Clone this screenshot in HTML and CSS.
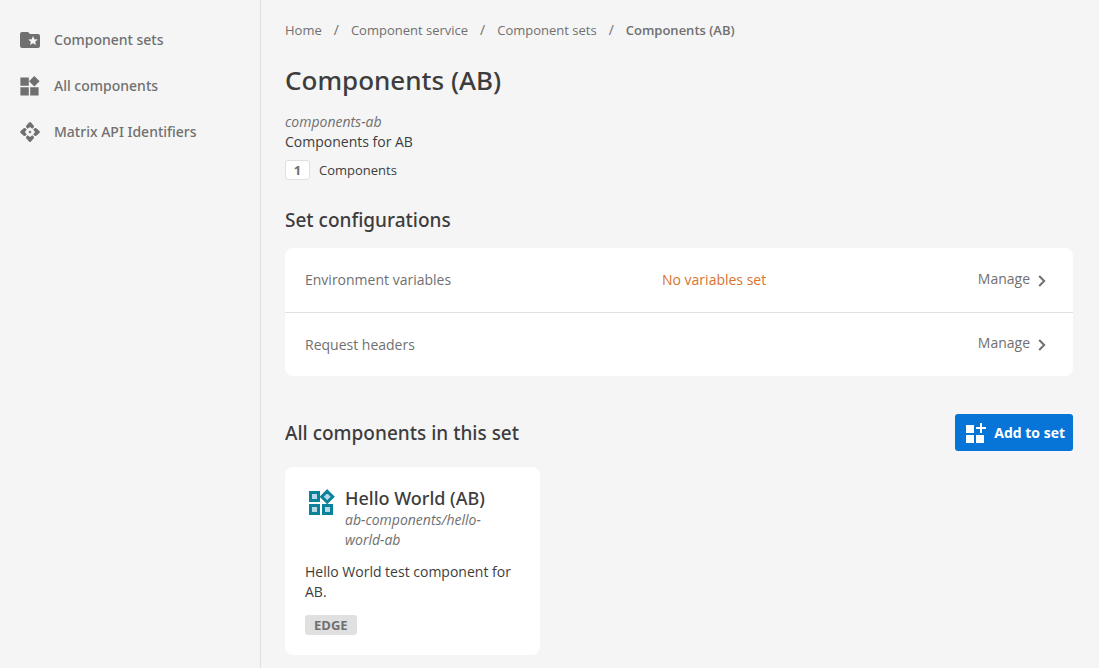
FILE: index.html
```html
<!DOCTYPE html>
<html lang="en">
<head>
<meta charset="utf-8">
<meta name="viewport" content="width=device-width, initial-scale=1">
<title>Components (AB)</title>
<link rel="stylesheet" href="styles.css">
</head>
<body>
<div class="layout">
  <nav class="sidebar" aria-label="Main">
    <a class="nav-link" href="#sets">
      <svg class="icon" viewBox="0 0 24 24" aria-hidden="true"><path d="M20 6h-8l-2-2H4a2 2 0 0 0-2 2v12a2 2 0 0 0 2 2h16a2 2 0 0 0 2-2V8a2 2 0 0 0-2-2m-2.060 11L15 15.280 12.060 17l.78-3.330-2.590-2.240 3.410-.29L15 8l1.340 3.140 3.410.29-2.590 2.240z"/></svg>
      Component sets
    </a>
    <a class="nav-link" href="#all">
      <svg class="icon" viewBox="0 0 24 24" aria-hidden="true"><path d="M12.200 13.200h8.400v8.200h-8.400zM2.400 21.400h8.400v-8.200H2.400zM2.400 3.600v8.200h8.400V3.600zM16.300 2L11 7.300l5.300 5.300 5.300-5.300z"/></svg>
      All components
    </a>
    <a class="nav-link" href="#identifiers">
      <svg class="icon" viewBox="0 0 24 24" aria-hidden="true"><path d="M12 10.500l1.500 1.500-1.500 1.500-1.500-1.500zM8 6l3-3.400q1-1 2 0L16 6v1l-1.600 1.800L12 6.900 9.600 8.800 8 7zM8 18l3 3.400q1 1 2 0L16 18v-1l-1.600-1.800L12 17.100l-2.400-1.900L8 17zM6 8l-3.400 3q-1 1 0 2L6 16h1l1.800-1.600L6.900 12l1.900-2.400L7 8zM18 8l3.400 3q1 1 0 2L18 16h-1l-1.800-1.600 1.900-2.400-1.900-2.400L17 8z"/></svg>
      Matrix API Identifiers
    </a>
  </nav>
  <main class="content">
    <nav aria-label="Breadcrumb">
      <ol class="breadcrumb">
        <li><a href="#home">Home</a></li>
        <li><a href="#service">Component service</a></li>
        <li><a href="#sets">Component sets</a></li>
        <li aria-current="page">Components (AB)</li>
      </ol>
    </nav>
    <h1 class="page-title">Components (AB)</h1>
    <p class="slug">components-ab</p>
    <p>Components for AB</p>
    <p class="count"><span class="count-badge">1</span>Components</p>

    <section>
      <h2 class="section-title">Set configurations</h2>
      <div class="config">
        <div class="config-row">
          <span>Environment variables</span>
          <span class="warning">No variables set</span>
          <a class="manage" href="#variables">Manage
            <svg class="chevron" viewBox="0 0 8 12" aria-hidden="true"><path d="M1.200 1 6.200 6l-5 5"/></svg></a>
        </div>
        <div class="config-row">
          <span>Request headers</span>
          <span></span>
          <a class="manage" href="#headers">Manage
            <svg class="chevron" viewBox="0 0 8 12" aria-hidden="true"><path d="M1.200 1 6.200 6l-5 5"/></svg></a>
        </div>
      </div>
    </section>

    <section>
      <div class="section-head">
        <h2>All components in this set</h2>
        <button class="add-button" type="button">
          <svg class="icon" viewBox="0 0 24 24" aria-hidden="true"><path d="M3 4h8v8H3zM3 14h8v8H3zM13 14h8v8h-8zM17 2h2v4h4v2h-4v4h-2V8h-4V6h4z"/></svg>
          Add to set
        </button>
      </div>
      <div class="cards">
        <article class="card">
          <div class="card-head">
            <svg class="card-icon" viewBox="0 0 32 32" aria-hidden="true"><path d="M5.500 5.500h8v8h-8zM5.500 18.500h8v8h-8zM18.500 18.500h8v8h-8zM22.200 4.200l5.500 5.500-5.500 5.500-5.500-5.500z"/></svg>
            <div>
              <h3 class="card-title">Hello World (AB)</h3>
              <p class="slug">ab-components/hello-world-ab</p>
            </div>
          </div>
          <p>Hello World test component for AB.</p>
          <span class="tag">EDGE</span>
        </article>
      </div>
    </section>
  </main>
</div>
</body>
</html>
```
FILE: styles.css
```css
* { box-sizing: border-box; }

body {
  margin: 0;
  background: #f5f5f5;
  color: #3d3d3d;
  font: 14px/20px "Open Sans", sans-serif;
}

h1, h2, h3, p, ol { margin: 0; padding: 0; }
h1, h2, h3 { font-family: "Noto Sans", "Open Sans", sans-serif; font-weight: 500; }
h2 { font-size: 19px; line-height: 28px; }
a { color: inherit; text-decoration: none; }

.layout { display: flex; min-height: 100vh; }

.sidebar {
  flex: 0 0 261px;
  padding: 17px 18px;
  border-right: 1px solid #e0e0e0;
}

.nav-link {
  display: flex;
  align-items: center;
  gap: 12px;
  height: 46px;
  color: #707070;
  font-family: "Noto Sans", "Open Sans", sans-serif;
  font-weight: 500;
}

.icon { width: 24px; height: 24px; fill: currentColor; }

.content { flex: 1; min-width: 0; padding: 20px 26px 13px 24px; }

.breadcrumb {
  display: flex;
  list-style: none;
  color: #707070;
  font-size: 13px;
}

.breadcrumb li + li::before { content: "/"; margin: 0 12px; font-weight: 400; font-size: 14px; }
.breadcrumb [aria-current] { font-weight: 600; }

.page-title { margin: 22px 0 14px; font-size: 26px; line-height: 36px; }
.slug { color: #707070; font-style: italic; }

.count { display: flex; align-items: center; gap: 9px; margin-top: 8px; font-size: 13px; }

.count-badge {
  width: 25px;
  border: 1px solid #e0e0e0;
  border-radius: 3px;
  background: #fff;
  color: #707070;
  font-size: 13px;
  font-weight: 700;
  line-height: 18px;
  text-align: center;
}

.section-title { margin: 26px 0 14px; }

.config { border-radius: 8px; background: #fff; color: #707070; }

.config-row {
  display: grid;
  grid-template-columns: 357px 1fr auto;
  align-items: center;
  height: 64px;
  padding: 0 27px 0 20px;
}

.config-row + .config-row { border-top: 1px solid #e0e0e0; }
.warning { color: #d9732e; }
.manage { display: flex; align-items: center; gap: 8px; padding-bottom: 3px; }
.chevron { width: 8px; height: 12px; margin-top: 4px; fill: none; stroke: #707070; stroke-width: 2; }

.section-head { display: flex; align-items: center; justify-content: space-between; margin: 38px 0 16px; }

.add-button {
  display: flex;
  align-items: center;
  gap: 7px;
  height: 37px;
  padding: 0 8px;
  border: 0;
  border-radius: 3px;
  background: #0774d7;
  color: #fff;
  font: 700 14px/20px "Open Sans", sans-serif;
}

.cards { display: grid; grid-template-columns: repeat(auto-fill, minmax(250px, 1fr)); gap: 12px; }
.card { padding: 20px; border-radius: 8px; background: #fff; }
.card-head { display: flex; gap: 8px; margin-bottom: 12px; }
.card-icon { flex: none; width: 32px; height: 32px; fill: #b8d8e8; stroke: #0a8299; stroke-width: 3; }
.card-title { font-size: 18px; line-height: 23px; }

.tag {
  display: inline-block;
  margin-top: 13px;
  padding: 0 9px;
  border-radius: 3px;
  background: #e0e0e0;
  color: #707070;
  font-size: 13px;
  font-weight: 700;
  line-height: 20px;
}
```
